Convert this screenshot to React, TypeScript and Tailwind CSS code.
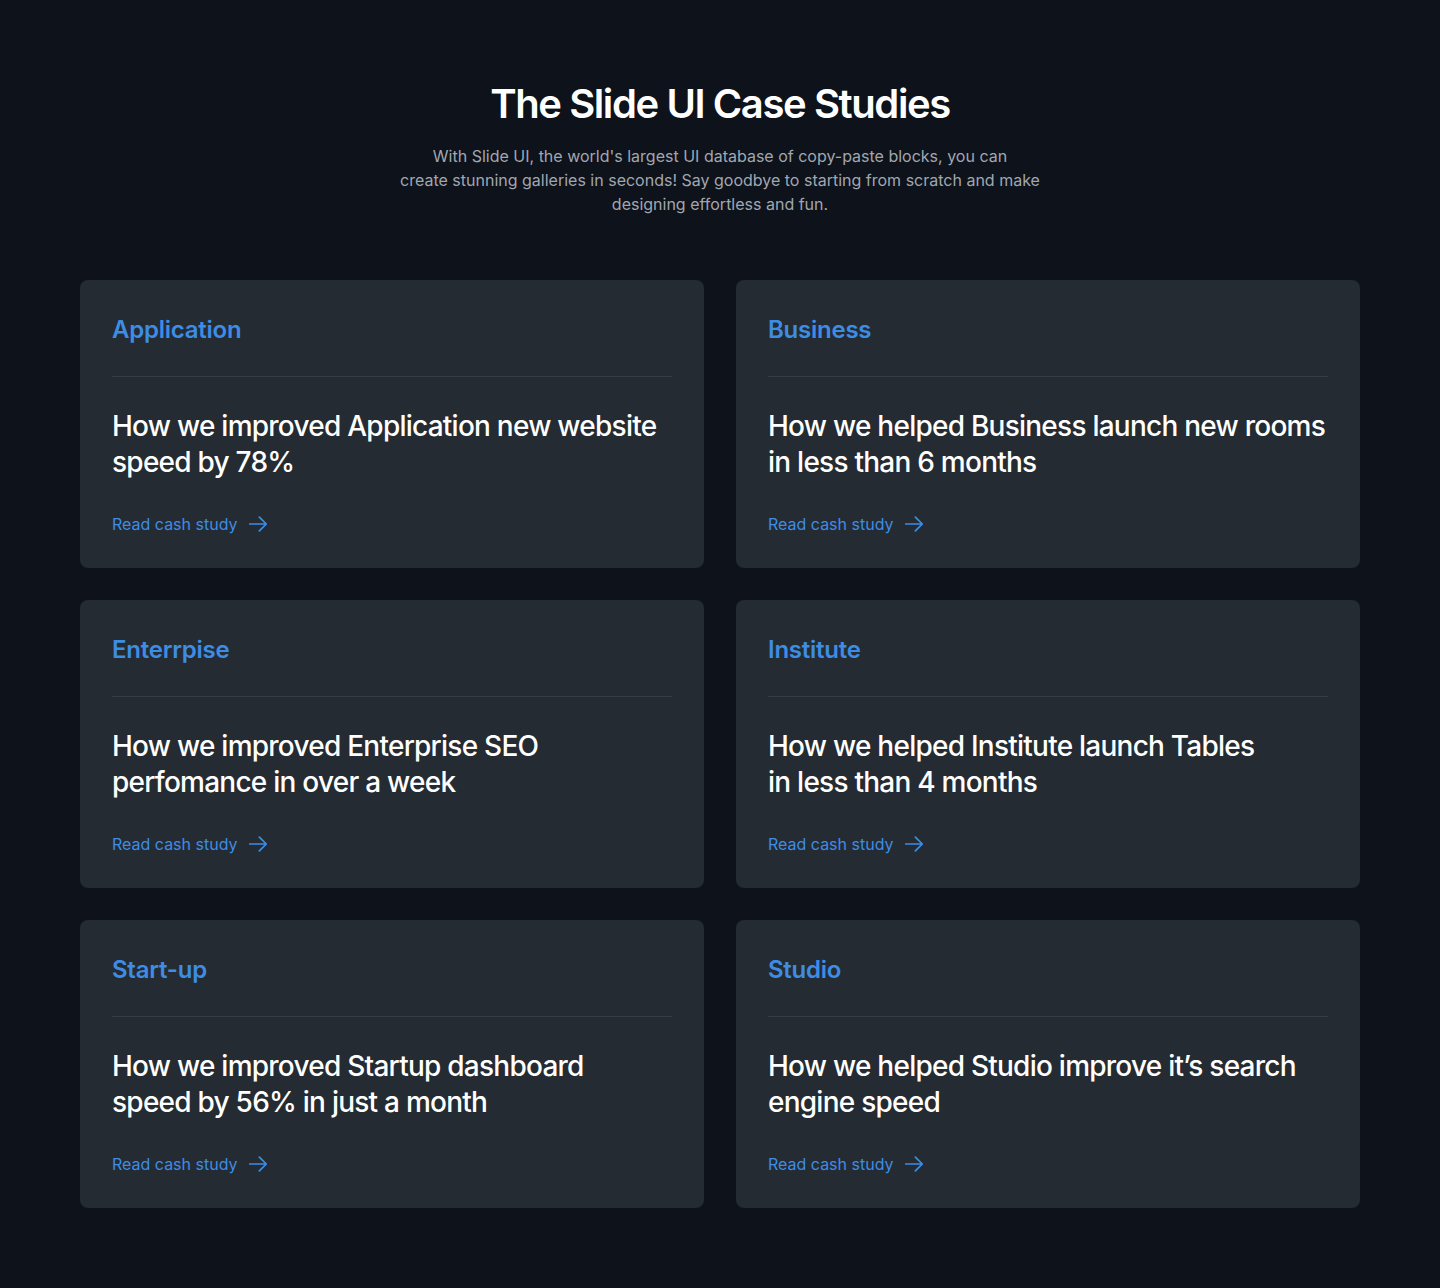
const studies = [
  { category: "Application", title: "How we improved Application new website speed by 78%" },
  { category: "Business", title: "How we helped Business launch new rooms in less than 6 months" },
  { category: "Enterrpise", title: "How we improved Enterprise SEO perfomance in over a week" },
  { category: "Institute", title: "How we helped Institute launch Tables\nin less than 4 months" },
  { category: "Start-up", title: "How we improved Startup dashboard\nspeed by 56% in just a month" },
  { category: "Studio", title: "How we helped Studio improve it’s search engine speed" },
];

function Arrow() {
  return (
    <svg width="22" height="22" viewBox="0 0 24 24" fill="none" stroke="currentColor" strokeWidth="1.9" strokeLinecap="round" strokeLinejoin="round">
      <path d="M13.5 4.5 21 12m0 0-7.5 7.5M21 12H3" />
    </svg>
  );
}

export default function App() {
  return (
    <div
      className="min-h-[1288px] bg-[#0d121b] px-20 pt-20 pb-20"
      style={{ fontFamily: "Inter, 'Noto Sans', sans-serif" }}
    >
      <div className="flex flex-col items-center text-center">
        <h1 className="text-[40px] leading-[48px] font-semibold tracking-[-0.035em] text-white">
          The Slide UI Case Studies
        </h1>
        <p className="mt-4 max-w-[660px] whitespace-pre-line text-base leading-6 text-[#a1a7b0]">
          {"With Slide UI, the world's largest UI database of copy-paste blocks, you can\ncreate stunning galleries in seconds! Say goodbye to starting from scratch and make\ndesigning effortless and fun."}
        </p>
      </div>

      <div className="mt-16 grid grid-cols-2 gap-8">
        {studies.map(s => (
          <div key={s.category} className="rounded-lg bg-[#252b32] px-8 pt-[34px] pb-8">
            <div className="text-2xl leading-8 font-semibold tracking-[-0.01em] text-[#3d8de5]">{s.category}</div>
            <div className="mt-[30px] mb-[31px] h-px bg-[#363c44]" />
            <h3 className="whitespace-pre-line text-[28px] leading-9 font-medium tracking-[-0.027em] text-white">
              {s.title}
            </h3>
            <a href="#" className="mt-8 flex items-center gap-[9px] text-base leading-6 text-[#3d8de5]">
              Read cash study
              <Arrow />
            </a>
          </div>
        ))}
      </div>
    </div>
  );
}
